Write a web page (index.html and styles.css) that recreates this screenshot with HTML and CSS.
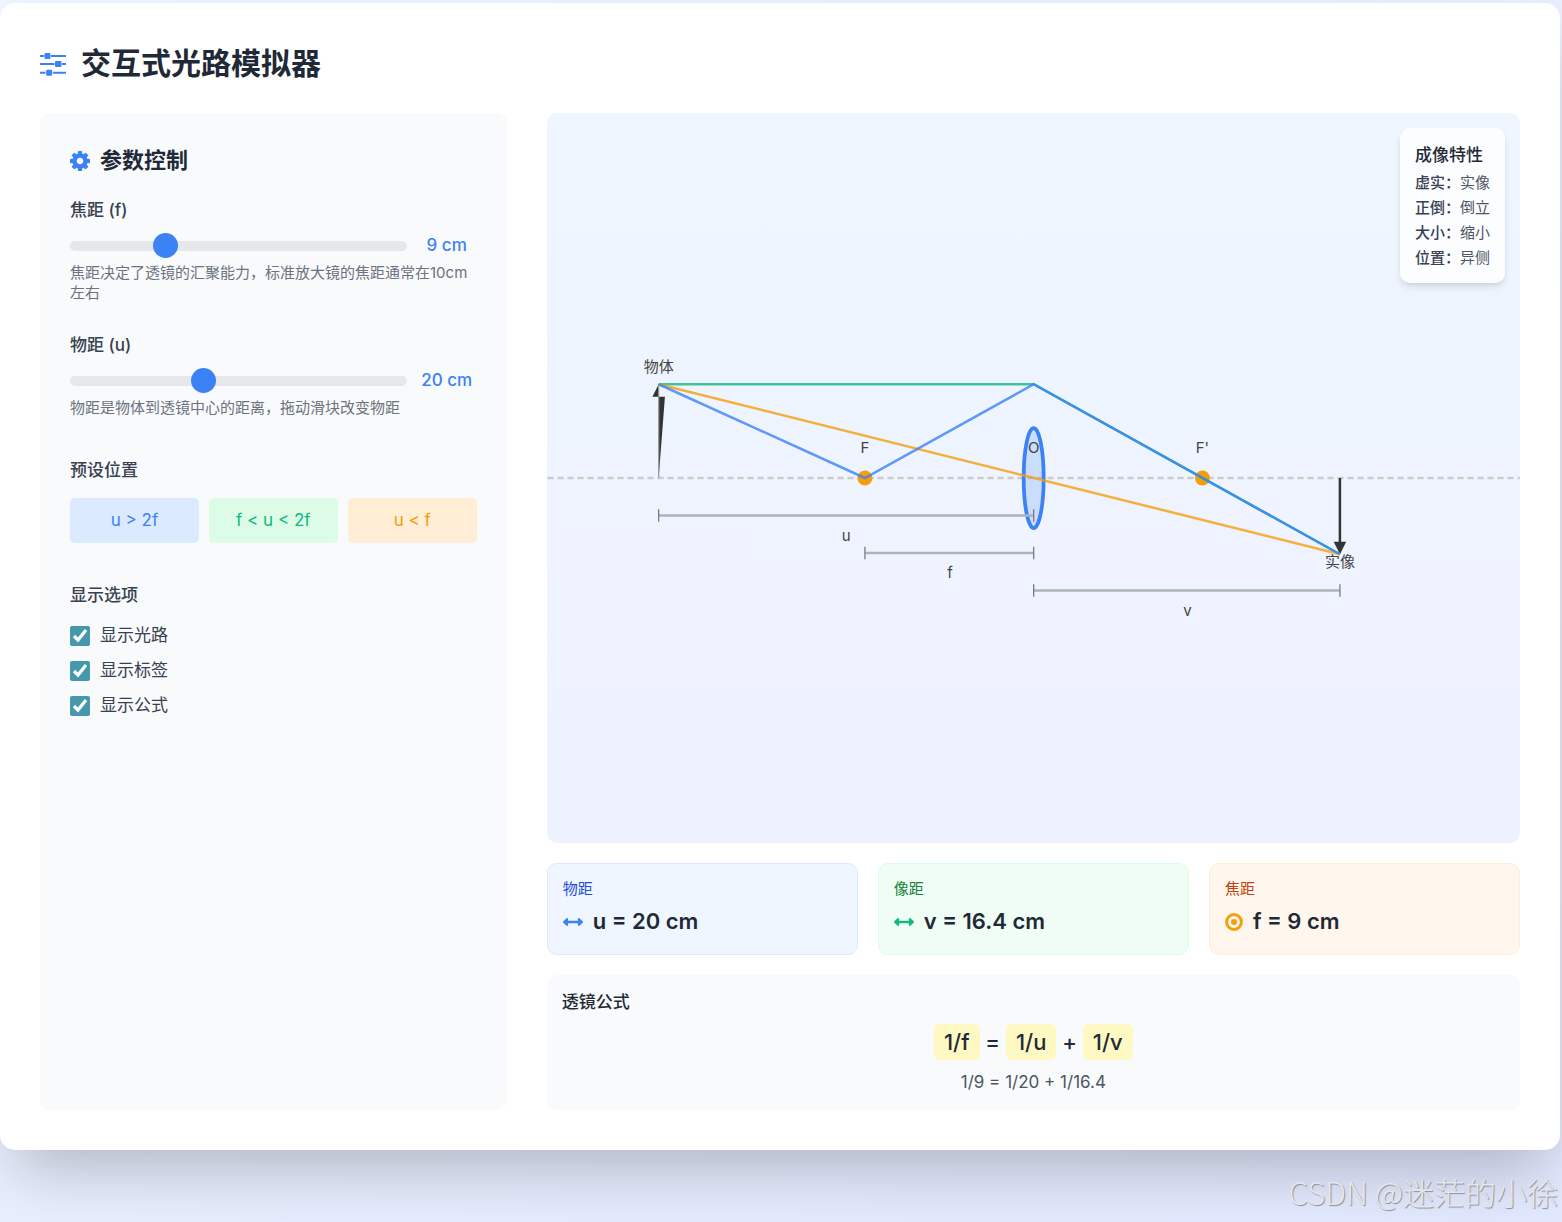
FILE: index.html
```html
<!DOCTYPE html>
<html lang="zh-CN">
<head>
    <meta charset="UTF-8">
    <meta name="viewport" content="width=device-width, initial-scale=1.0">
    <title>交互式光路模拟器</title>
    <link rel="stylesheet" href="styles.css">
</head>
<body>

    <main class="card">
        <h2 class="card-title">
            <svg class="icon-sliders" viewBox="0 0 26 26" aria-hidden="true">
                <path d="M0 6h4M11 6h15M0 14h14.500M22 14h4M0 22.800h5.500M13 22.800h13" stroke="currentColor" stroke-width="2"/>
                <rect x="4.500" y="3" width="6" height="6" rx="1"/>
                <rect x="15" y="11" width="6.500" height="6" rx="1"/>
                <rect x="6.200" y="19.800" width="6" height="6" rx="1"/>
            </svg>
            交互式光路模拟器
        </h2>

        <div class="layout">
            <!-- Controls -->
            <section class="panel">
                <h3 class="panel-title">
                    <svg class="icon-cog" viewBox="0 0 1536 1536" aria-hidden="true">
                        <path d="M1024 768q0-106-75-181t-181-75-181 75-75 181 75 181 181 75 181-75 75-181zm512-109v222q0 12-8 23t-20 13l-185 28q-19 54-39 91 35 50 107 138 10 12 10 25t-9 23q-27 37-99 108t-94 71q-12 0-26-9l-138-108q-44 23-91 38-16 136-29 186-7 28-36 28h-222q-14 0-24.500-8.500t-11.500-21.500l-28-184q-49-16-90-37l-141 107q-10 9-25 9-14 0-25-11-126-114-165-168-7-10-7-23 0-12 8-23 15-21 51-66.500t54-70.500q-27-50-41-99l-183-27q-13-2-21-12.500t-8-23.500v-222q0-12 8-23t19-13l186-28q14-46 39-92-40-57-107-138-10-12-10-24 0-10 9-23 26-36 98.500-107.500t94.500-71.500q13 0 26 10l138 107q44-23 91-38 16-136 29-186 7-28 36-28h222q14 0 24.500 8.500t11.500 21.500l28 184q49 16 90 37l142-107q9-9 24-9 13 0 25 10 129 119 165 170 7 8 7 22 0 12-8 23-15 21-51 66.500t-54 70.500q26 50 41 98l183 28q13 2 21 12.500t8 23.500z"/>
                    </svg>
                    参数控制
                </h3>

                <div class="field">
                    <label class="field-label" for="focal">焦距 (f)</label>
                    <div class="slider-row">
                        <input type="range" class="slider" id="focal" min="5" max="20" value="9">
                        <output class="slider-value" for="focal">9 cm</output>
                    </div>
                    <p class="hint">焦距决定了透镜的汇聚能力，标准放大镜的焦距通常在10cm左右</p>
                </div>

                <div class="field">
                    <label class="field-label" for="distance">物距 (u)</label>
                    <div class="slider-row">
                        <input type="range" class="slider" id="distance" min="1" max="50" value="20">
                        <output class="slider-value" for="distance">20 cm</output>
                    </div>
                    <p class="hint">物距是物体到透镜中心的距离，拖动滑块改变物距</p>
                </div>

                <div class="group">
                    <h4 class="group-title">预设位置</h4>
                    <div class="presets">
                        <button type="button" class="preset preset-blue">u &gt; 2f</button>
                        <button type="button" class="preset preset-green">f &lt; u &lt; 2f</button>
                        <button type="button" class="preset preset-orange">u &lt; f</button>
                    </div>
                </div>

                <div class="group">
                    <h4 class="group-title">显示选项</h4>
                    <div class="options">
                        <label class="option"><input type="checkbox" id="showRays" checked>显示光路</label>
                        <label class="option"><input type="checkbox" id="showLabels" checked>显示标签</label>
                        <label class="option"><input type="checkbox" id="showFormula" checked>显示公式</label>
                    </div>
                </div>
            </section>

            <section class="results">
                <!-- Optical bench, origin at the centre of the lens -->
                <div class="stage">
                    <svg class="diagram" viewBox="-389 -292 778 584" role="img" aria-label="凸透镜光路图">
                        <line class="axis" x1="-389" y1="0" x2="389" y2="0"/>
                        <ellipse class="lens" cx="0" cy="0" rx="8" ry="40"/>
                        <circle class="focus" cx="-135" cy="0" r="6"/>
                        <circle class="focus" cx="135" cy="0" r="6"/>

                        <path class="arrow" d="M-300 0V-75L-305 -65H-295Z"/>
                        <path class="arrow-stem-thin" d="M-300 0V-75"/>
                        <path class="arrow-stem" d="M245 0V53"/>
                        <path class="arrow" d="M240 51H250L245 61Z"/>

                        <path class="ray ray-green" d="M-300 -75H0L245 61"/>
                        <path class="ray ray-orange" d="M-300 -75L245 61"/>
                        <path class="ray ray-blue" d="M-300 -75L-135 0L0 -75L245 61"/>

                        <path class="measure" d="M-300 30H0M-135 60H0M0 90H245"/>
                        <path class="measure-end" d="M-300 25V35M0 25V35M-135 55V65M0 55V65M0 85V95M245 85V95"/>

                        <g class="labels">
                            <text x="-300" y="-85">物体</text>
                            <text x="-135" y="-20">F</text>
                            <text x="0" y="-20">O</text>
                            <text x="135" y="-20">F'</text>
                            <text x="245" y="71">实像</text>
                            <text x="-150" y="50">u</text>
                            <text x="-67" y="80">f</text>
                            <text x="123" y="110">v</text>
                        </g>
                    </svg>

                    <div class="traits">
                        <h4 class="traits-title">成像特性</h4>
                        <p><b>虚实：</b>实像</p>
                        <p><b>正倒：</b>倒立</p>
                        <p><b>大小：</b>缩小</p>
                        <p><b>位置：</b>异侧</p>
                    </div>
                </div>

                <div class="values">
                    <div class="value value-blue">
                        <div class="value-name">物距</div>
                        <div class="value-number">
                            <svg class="icon-arrow" viewBox="0 0 20 20" aria-hidden="true">
                                <path d="M0.300 9.300L3.600 6.300Q4.900 5.700 5.100 6.900V8.800H14.900V6.900Q15.100 5.700 16.400 6.300L19.700 9.300Q20.200 10 19.700 10.700L16.400 13.700Q15.100 14.300 14.900 13.100V11.200H5.100V13.100Q4.900 14.300 3.600 13.700L0.300 10.700Q-0.200 10 0.300 9.300Z"/>
                            </svg>
                            u = 20 cm
                        </div>
                    </div>
                    <div class="value value-green">
                        <div class="value-name">像距</div>
                        <div class="value-number">
                            <svg class="icon-arrow" viewBox="0 0 20 20" aria-hidden="true">
                                <path d="M0.300 9.300L3.600 6.300Q4.900 5.700 5.100 6.900V8.800H14.900V6.900Q15.100 5.700 16.400 6.300L19.700 9.300Q20.200 10 19.700 10.700L16.400 13.700Q15.100 14.300 14.900 13.100V11.200H5.100V13.100Q4.900 14.300 3.600 13.700L0.300 10.700Q-0.200 10 0.300 9.300Z"/>
                            </svg>
                            v = 16.4 cm
                        </div>
                    </div>
                    <div class="value value-orange">
                        <div class="value-name">焦距</div>
                        <div class="value-number">
                            <svg class="icon-dot" viewBox="0 0 18 18" aria-hidden="true">
                                <circle cx="9" cy="9" r="7.400" fill="none" stroke="currentColor" stroke-width="3"/>
                                <circle cx="9" cy="9" r="3"/>
                            </svg>
                            f = 9 cm
                        </div>
                    </div>
                </div>

                <div class="formula">
                    <h4 class="formula-title">透镜公式</h4>
                    <p class="formula-main"><span class="term">1/f</span> = <span class="term">1/u</span> + <span class="term">1/v</span></p>
                    <p class="formula-sub">1/9 = 1/20 + 1/16.4</p>
                </div>
            </section>
        </div>
    </main>

    <footer class="credit">CSDN @迷茫的小徐</footer>

</body>
</html>
```
FILE: styles.css
```css
* {
    box-sizing: border-box;
}

body {
    margin: 0;
    padding: 3px 2px 0 0;
    min-height: 100vh;
    font-family: Inter, "Noto Sans CJK SC", sans-serif;
    font-size: 17px;
    line-height: 25px;
    color: #1f2937;
    background: linear-gradient(to bottom right, #eff6ff, #e2e8fe);
}

h2, h3, h4, p {
    margin: 0;
}

svg {
    flex: none;
    fill: currentColor;
}

.card {
    padding: 40px;
    background-color: #fff;
    border-radius: 15px;
    box-shadow: 0 31px 62px -15px rgba(0, 0, 0, 0.25);
}

.card-title {
    display: flex;
    align-items: center;
    gap: 15px;
    margin-bottom: 30px;
    font-size: 30px;
    line-height: 40px;
}

.layout {
    display: grid;
    grid-template-columns: repeat(3, 1fr);
    gap: 40px;
}

/* Controls */
.panel {
    padding: 30px;
    background-color: #f9fafb;
    border-radius: 10px;
}

.panel-title {
    display: flex;
    align-items: center;
    gap: 10px;
    margin-bottom: 20px;
    font-size: 22px;
    font-weight: 600;
    line-height: 35px;
}

.icon-sliders {
    width: 26px;
    height: 26px;
    color: #3b82f6;
}

.icon-cog {
    width: 20px;
    height: 20px;
    color: #3b82f6;
}

.field {
    margin-bottom: 30px;
}

.field-label {
    display: block;
    margin-bottom: 10px;
    font-weight: 500;
    color: #374151;
}

.slider-row {
    display: flex;
    align-items: center;
    gap: 10px;
    height: 25px;
}

.slider {
    flex: 1;
    min-width: 0;
    height: 10px;
    margin: 0;
    appearance: none;
    background-color: #e5e7eb;
    border-radius: 5px;
}

.slider::-webkit-slider-thumb {
    appearance: none;
    width: 25px;
    height: 25px;
    background-color: #3b82f6;
    border-radius: 50%;
    cursor: pointer;
}

.slider-value {
    width: 60px;
    text-align: center;
    font-weight: 500;
    color: #3b82f6;
}

.hint {
    margin-top: 5px;
    font-size: 15px;
    line-height: 20px;
    color: #6b7280;
}

.group {
    margin-top: 40px;
}

.group-title {
    margin-bottom: 15px;
    font-size: 17px;
    font-weight: 500;
    color: #374151;
}

.presets {
    display: grid;
    grid-template-columns: repeat(3, 1fr);
    gap: 10px;
}

.preset {
    padding: 10px;
    border: none;
    border-radius: 5px;
    font: inherit;
    cursor: pointer;
}

.preset-blue {
    background-color: #dbeafe;
    color: #3b82f6;
}

.preset-green {
    background-color: #dcfce7;
    color: #10b981;
}

.preset-orange {
    background-color: #ffedd5;
    color: #f59e0b;
}

.options {
    display: grid;
    gap: 10px;
}

.option {
    display: flex;
    align-items: center;
    gap: 10px;
    color: #374151;
}

.option input {
    width: 20px;
    height: 20px;
    margin: 0;
    accent-color: #4699ac;
}

/* Results */
.results {
    grid-column: span 2;
    display: flex;
    flex-direction: column;
    gap: 20px;
}

.stage {
    position: relative;
    aspect-ratio: 4 / 3;
    background: linear-gradient(to bottom, #eff6ff, #eef2ff);
    border-radius: 10px;
    overflow: hidden;
}

.diagram {
    display: block;
    width: 100%;
    height: 100%;
}

.axis {
    stroke: #ccc;
    stroke-width: 2;
    stroke-dasharray: 5 3;
}

.lens {
    fill: rgba(59, 130, 246, 0.2);
    stroke: #3b82f6;
    stroke-width: 3;
}

.focus {
    fill: #f59e0b;
}

.arrow {
    fill: #333;
}

.arrow-stem {
    stroke: #333;
    stroke-width: 2;
}

.arrow-stem-thin {
    stroke: #999;
    stroke-width: 1;
}

.ray {
    fill: none;
    stroke-width: 2;
    opacity: 0.8;
}

.ray-green {
    stroke: #10b981;
}

.ray-orange {
    stroke: #f59e0b;
}

.ray-blue {
    stroke: #3b82f6;
}

.measure {
    fill: none;
    stroke: #b0b2b6;
    stroke-width: 2;
}

.measure-end {
    fill: none;
    stroke: #777;
    stroke-width: 1;
}

.labels {
    font-size: 12px;
    text-anchor: middle;
    fill: #444;
}

.traits {
    position: absolute;
    top: 15px;
    right: 15px;
    padding: 15px;
    font-size: 15px;
    line-height: 20px;
    color: #4b5563;
    background-color: rgba(255, 255, 255, 0.8);
    border-radius: 10px;
    box-shadow: 0 5px 8px -1px rgba(0, 0, 0, 0.1), 0 2px 5px -2px rgba(0, 0, 0, 0.1);
}

.traits p {
    margin-top: 5px;
}

.traits b {
    font-weight: 500;
    color: #374151;
}

.traits-title {
    font-size: 17px;
    font-weight: 500;
    line-height: 25px;
    color: #1f2937;
}

.values {
    display: grid;
    grid-template-columns: repeat(3, 1fr);
    gap: 20px;
}

.value {
    padding: 15px;
    border: 1px solid;
    border-radius: 10px;
}

.value-blue {
    background-color: #eff6ff;
    border-color: #dbeafe;
}

.value-green {
    background-color: #f0fdf4;
    border-color: #dcfce7;
}

.value-orange {
    background-color: #fff7ed;
    border-color: #ffedd5;
}

.value-name {
    margin-bottom: 5px;
    font-size: 15px;
    line-height: 20px;
}

.value-blue .value-name {
    color: #1d4ed8;
}

.value-green .value-name {
    color: #15803d;
}

.value-orange .value-name {
    color: #c2410c;
}

.value-number {
    display: flex;
    align-items: center;
    gap: 10px;
    font-size: 22px;
    font-weight: 600;
    line-height: 35px;
}

.icon-arrow {
    width: 20px;
    height: 20px;
}

.icon-dot {
    width: 18px;
    height: 18px;
}

.value-blue svg {
    color: #3b82f6;
}

.value-green svg {
    color: #10b981;
}

.value-orange svg {
    color: #f59e0b;
}

.formula {
    padding: 15px;
    background-color: #f9fafb;
    border-radius: 10px;
}

.formula-title {
    font-size: 17px;
    font-weight: 500;
}

.formula-main {
    margin: 10px 0;
    text-align: center;
    font-size: 22px;
    font-weight: 500;
    line-height: 35px;
}

.term {
    padding: 5px 10px;
    background-color: #fef9c3;
    border-radius: 5px;
}

.formula-sub {
    text-align: center;
    color: #4b5563;
}

.credit {
    padding: 22px 2px 0 0;
    text-align: right;
    font-family: "Noto Sans CJK SC", sans-serif;
    font-size: 31px;
    font-weight: 300;
    line-height: 40px;
    color: #e5e7eb;
    text-shadow: 1px 1px 1px #8b8f9a;
}
```
